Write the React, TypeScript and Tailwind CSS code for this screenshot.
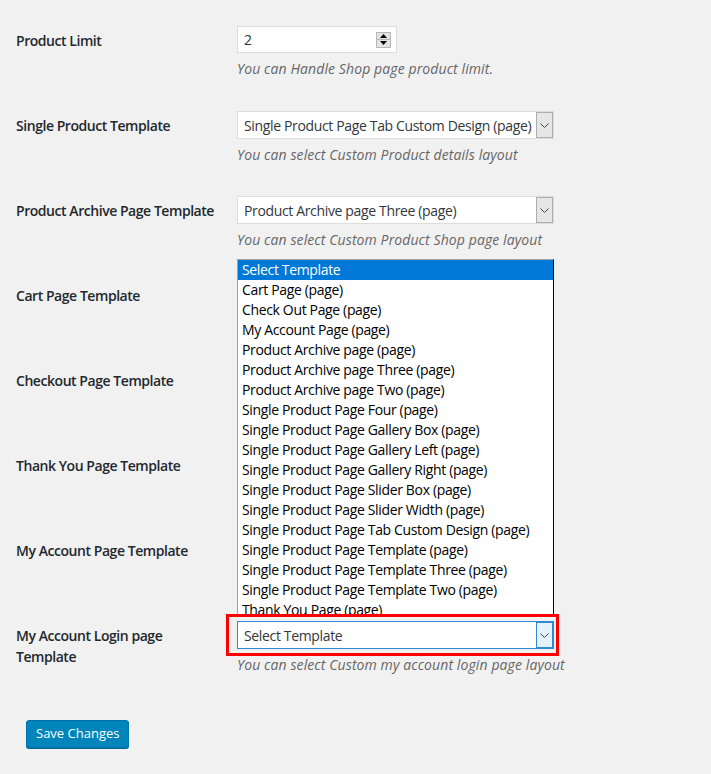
import React from 'react'

const font = { fontFamily: '"Open Sans", "Noto Sans", sans-serif' }

const options = [
  'Select Template',
  'Cart Page (page)',
  'Check Out Page (page)',
  'My Account Page (page)',
  'Product Archive page (page)',
  'Product Archive page Three (page)',
  'Product Archive page Two (page)',
  'Single Product Page Four (page)',
  'Single Product Page Gallery Box (page)',
  'Single Product Page Gallery Left (page)',
  'Single Product Page Gallery Right (page)',
  'Single Product Page Slider Box (page)',
  'Single Product Page Slider Width (page)',
  'Single Product Page Tab Custom Design (page)',
  'Single Product Page Template (page)',
  'Single Product Page Template Three (page)',
  'Single Product Page Template Two (page)',
  'Thank You Page (page)',
]

const Chevron = () => (
  <svg width="9" height="5" viewBox="0 0 9 5" fill="none">
    <path d="M0.5 0.5 L4.5 4.5 L8.5 0.5" stroke="#444" strokeWidth="1" />
  </svg>
)

const Select: React.FC<{ value: string; focused?: boolean }> = ({ value, focused }) => (
  <div
    className={`relative flex h-[28px] w-[317px] items-center bg-white text-[14px] text-[#32373c] border ${
      focused ? 'border-[#2f8ad6]' : 'border-[#dddddd]'
    }`}
  >
    <span className="flex-1 truncate pl-[6px] tracking-[-0.35px]">{value}</span>
    <div
      className={`flex h-[26px] w-[17px] items-center justify-center border ${
        focused ? 'border-[#2f8ad6] bg-[#e5f1fb]' : 'border-[#adadad] bg-[#e6e6e6]'
      }`}
    >
      <Chevron />
    </div>
  </div>
)

const Description: React.FC<{ children: React.ReactNode }> = ({ children }) => (
  <p className="mt-[5px] text-[14px] italic leading-[21px] text-[#666] tracking-[0.1px]">{children}</p>
)

const NumberInput = () => (
  <div className="flex h-[27px] w-[160px] items-center justify-between border border-[#dddddd] bg-white pl-[6px] pr-[5px] text-[14px] text-[#32373c]">
    <span>2</span>
    <div className="flex h-[16px] w-[15px] flex-col border border-[#b8b8b8] bg-[#e3e3e3]">
      <div className="flex flex-1 items-center justify-center border-b border-[#b8b8b8]">
        <svg width="7" height="4" viewBox="0 0 7 4">
          <path d="M0 4 L3.5 0 L7 4 Z" fill="#000" />
        </svg>
      </div>
      <div className="flex flex-1 items-center justify-center">
        <svg width="7" height="4" viewBox="0 0 7 4">
          <path d="M0 0 L3.5 4 L7 0 Z" fill="#000" />
        </svg>
      </div>
    </div>
  </div>
)

const labelClass =
  'w-[221px] shrink-0 pt-[4px] pr-[16px] text-[14px] font-semibold leading-[21px] text-[#23282d] tracking-[-0.45px]'

const Row: React.FC<{ label: string; children?: React.ReactNode }> = ({ label, children }) => (
  <div className="flex h-[85px]">
    <div className={labelClass}>{label}</div>
    <div className="relative">{children}</div>
  </div>
)

export default function App() {
  return (
    <div className="min-h-[774px] w-[711px] bg-[#f1f1f1] pl-[16px] pt-[26px]" style={font}>
      <Row label="Product Limit">
        <NumberInput />
        <Description>You can Handle Shop page product limit.</Description>
      </Row>
      <Row label="Single Product Template">
        <Select value="Single Product Page Tab Custom Design (page)" />
        <Description>You can select Custom Product details layout</Description>
      </Row>
      <Row label="Product Archive Page Template">
        <Select value="Product Archive page Three (page)" />
        <Description>You can select Custom Product Shop page layout</Description>
      </Row>
      {/* these rows' selects sit under the open dropdown list */}
      <Row label="Cart Page Template" />
      <Row label="Checkout Page Template" />
      <Row label="Thank You Page Template" />
      <Row label="My Account Page Template" />
      <div className="flex">
        <div className={labelClass}>My Account Login page Template</div>
        <div>
          <div className="relative w-[317px]">
            <div className="absolute bottom-full left-0 z-10 h-[362px] w-[317px] overflow-hidden border-t border-l border-t-[#a0a0a0] border-l-[#a0a0a0] border-r border-r-black bg-white">
              {options.map((o, i) => (
                <div
                  key={o}
                  className={`h-[20px] pl-[4px] text-[14px] leading-[20px] tracking-[-0.35px] ${
                    i === 0 ? 'bg-[#0078d7] text-white' : 'text-black'
                  }`}
                >
                  {o}
                </div>
              ))}
            </div>
            <div className="absolute -top-[7px] -bottom-[7px] -left-[11px] -right-[5px] z-20 border-[3px] border-[#ff0000] bg-[#f1f1f1]" />
            <div className="relative z-30">
              <Select value="Select Template" focused />
            </div>
          </div>
          <Description>You can select Custom my account login page layout</Description>
        </div>
      </div>
      <div className="pt-[45px] pl-[10px]">
        <button className="h-[28px] rounded-[3px] border border-[#0073aa] bg-[#0085ba] px-[9px] pb-[1px] text-[13px] text-white shadow-[0_1px_0_#006799]">
          Save Changes
        </button>
      </div>
    </div>
  )
}
